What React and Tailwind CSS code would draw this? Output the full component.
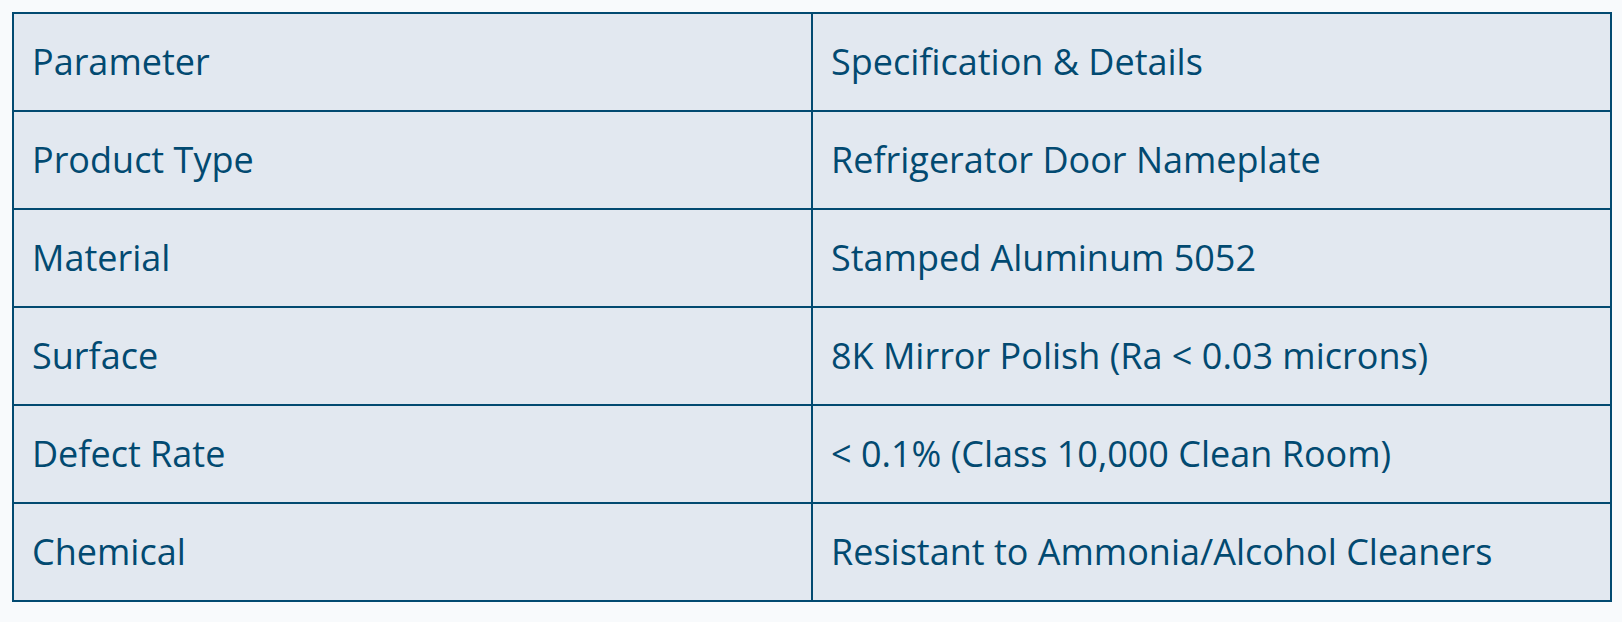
export default function App() {
  const rows = [
    ["Parameter", "Specification & Details"],
    ["Product Type", "Refrigerator Door Nameplate"],
    ["Material", "Stamped Aluminum 5052"],
    ["Surface", "8K Mirror Polish (Ra < 0.03 microns)"],
    ["Defect Rate", "< 0.1% (Class 10,000 Clean Room)"],
    ["Chemical", "Resistant to Ammonia/Alcohol Cleaners"],
  ];
  return (
    <div className="min-h-[622px] w-full bg-slate-50 pt-[12px] pl-[12px]" style={{ fontFamily: '"Open Sans", sans-serif' }}>
      <div className="w-[1600px] border-2 border-sky-900 bg-slate-200 text-sky-900">
        {rows.map((r, i) => (
          <div key={i} className={i === 0 ? "flex" : "flex border-t-2 border-sky-900"}>
            <div className="flex-1 px-[18px] py-[21px] text-[36px] leading-[54px]">{r[0]}</div>
            <div className="flex-1 border-l-2 border-sky-900 px-[18px] py-[21px] text-[36px] leading-[54px]">{r[1]}</div>
          </div>
        ))}
      </div>
    </div>
  );
}
